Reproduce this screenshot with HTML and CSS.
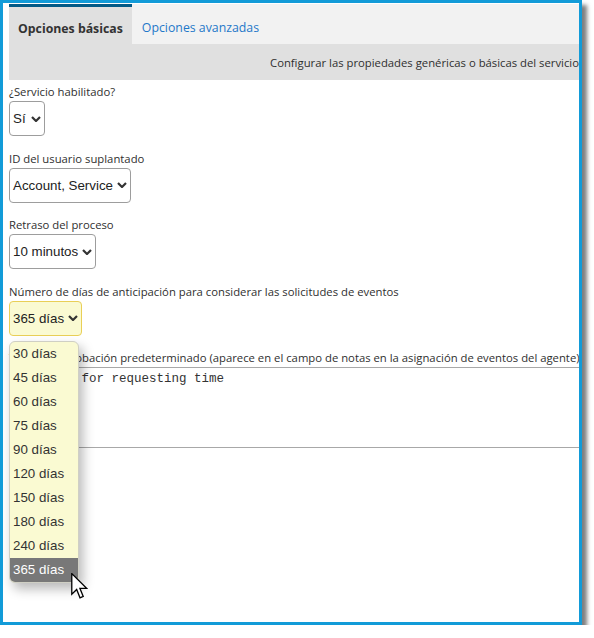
FILE: index.html
```html
<!DOCTYPE html>
<html lang="es">
<head>
    <meta charset="UTF-8">
    <meta name="viewport" content="width=device-width, initial-scale=1.0">
    <title>Propiedades del servicio</title>
    <link rel="stylesheet" href="styles.css">
</head>
<body>
    <div class="frame">
        <span class="edge-mark"></span>

        <div class="tabs">
            <div class="tab active">Opciones básicas</div>
            <div class="tab">Opciones avanzadas</div>
        </div>
        <div class="subheader">Configurar las propiedades genéricas o básicas del servicio</div>

        <div class="form">
            <div class="field">
                <label>¿Servicio habilitado?</label>
                <div class="select sel-enabled">
                    <span>Sí</span>
                    <svg class="chevron" width="10" height="6" viewBox="0 0 10 6"><path d="M1 1 L5 5 L9 1" /></svg>
                </div>
            </div>

            <div class="field">
                <label>ID del usuario suplantado</label>
                <div class="select">
                    <span>Account, Service</span>
                    <svg class="chevron" width="10" height="6" viewBox="0 0 10 6"><path d="M1 1 L5 5 L9 1" /></svg>
                </div>
            </div>

            <div class="field">
                <label>Retraso del proceso</label>
                <div class="select">
                    <span>10 minutos</span>
                    <svg class="chevron" width="10" height="6" viewBox="0 0 10 6"><path d="M1 1 L5 5 L9 1" /></svg>
                </div>
            </div>

            <div class="field field-open">
                <label>Número de días de anticipación para considerar las solicitudes de eventos</label>
                <div class="select-wrap">
                    <div class="select focused">
                        <span>365 días</span>
                        <svg class="chevron" width="10" height="6" viewBox="0 0 10 6"><path d="M1 1 L5 5 L9 1" /></svg>
                    </div>
                    <ul class="dropdown">
                        <li>30 días</li>
                        <li>45 días</li>
                        <li>60 días</li>
                        <li>75 días</li>
                        <li>90 días</li>
                        <li>120 días</li>
                        <li>150 días</li>
                        <li>180 días</li>
                        <li>240 días</li>
                        <li class="selected">365 días</li>
                    </ul>
                </div>
            </div>

            <div class="field">
                <label class="nowrap">Texto de aprobación predeterminado (aparece en el campo de notas en la asignación de eventos del agente)</label>
                <div class="notes">Approval for requesting time</div>
            </div>
        </div>

        <!-- mouse pointer over the last option -->
        <svg class="pointer" width="17" height="27" viewBox="0 0 13 21">
            <path d="M0.5 0.5 L0.5 16.5 L4.3 12.8 L6.9 19.3 L9.4 18.2 L6.8 11.9 L12 11.9 Z" />
        </svg>
    </div>
</body>
</html>
```

FILE: styles.css
```css
body {
    margin: 0;
    background-color: #fff;
    font-family: "Open Sans", Arial, sans-serif;
    color: #2f2f2f;
}
.frame {
    position: relative;
    box-sizing: border-box;
    width: 582px;
    height: 625px;
    padding: 1px 0 0 6px;
    border: 3px solid #129bd8;
    background-color: #fff;
    box-shadow: 5px 5px 4px rgba(0, 0, 0, 0.5);
    overflow: hidden;
}
.edge-mark {
    position: absolute;
    left: -3px;
    top: 204px;
    width: 3px;
    height: 25px;
    background-color: #3fae49;
}

/* tabs */
.tabs {
    display: flex;
    height: 40px;
    background-color: #f2f2f2;
}
.tab {
    display: flex;
    align-items: center;
    padding: 6px 10px 0;
    font-size: 12.3px;
    color: #1f78c9;
    white-space: nowrap;
}
.tab.active {
    padding: 6px 9px 0;
    border-top: 3px solid #035a86;
    background-color: #e0e0e0;
    color: #333;
    font-weight: 700;
}
.subheader {
    display: flex;
    align-items: center;
    justify-content: flex-end;
    height: 36px;
    background-color: #e0e0e0;
    font-size: 11.3px;
    white-space: nowrap;
}

/* form */
.form {
    padding-top: 4px;
}
.field {
    display: flex;
    flex-direction: column;
    align-items: flex-start;
    margin-bottom: 14.67px;
}
.field-open {
    margin-bottom: 14px;
}
label {
    display: block;
    padding-bottom: 2px;
    font-size: 11.3px;
    line-height: 15px;
}
.nowrap {
    white-space: nowrap;
}
.select {
    display: flex;
    align-items: center;
    gap: 4px;
    box-sizing: border-box;
    height: 35px;
    padding: 0 3px;
    border: 1px solid #9d9d9d;
    border-radius: 4px;
    background-color: #fff;
    font-family: "Liberation Sans", Arial, sans-serif;
    font-size: 13.33px;
    color: #222;
}
.sel-enabled {
    width: 36px;
    justify-content: space-between;
}
.chevron path {
    fill: none;
    stroke: #333;
    stroke-width: 2.2;
}
.select.focused {
    border-color: #e9cf57;
    background-color: #fafad2;
}
.select-wrap {
    position: relative;
}
.dropdown {
    position: absolute;
    top: calc(100% + 5px);
    left: 0;
    width: 70px;
    box-sizing: border-box;
    margin: 0;
    padding: 0;
    list-style: none;
    border: 1px solid #cfcfc4;
    border-radius: 6px;
    background-color: #fafad2;
    box-shadow: 4px 6px 12px rgba(0, 0, 0, 0.28);
    overflow: hidden;
    font-family: "Liberation Sans", Arial, sans-serif;
    font-size: 13.33px;
    color: #333;
    z-index: 2;
}
.dropdown li {
    height: 24px;
    line-height: 24px;
    padding-left: 3px;
}
.dropdown li.selected {
    background-color: #787878;
    color: #fff;
}
.notes {
    box-sizing: border-box;
    width: 620px;
    height: 81px;
    padding: 4px 4px;
    border: 1px solid #a8a8a8;
    font-family: "Liberation Mono", "Courier New", monospace;
    font-size: 12.5px;
    color: #333;
    white-space: pre;
}
.pointer {
    position: absolute;
    left: 68px;
    top: 570px;
    z-index: 3;
}
.pointer path {
    fill: #fff;
    stroke: #000;
    stroke-width: 1;
}
```
